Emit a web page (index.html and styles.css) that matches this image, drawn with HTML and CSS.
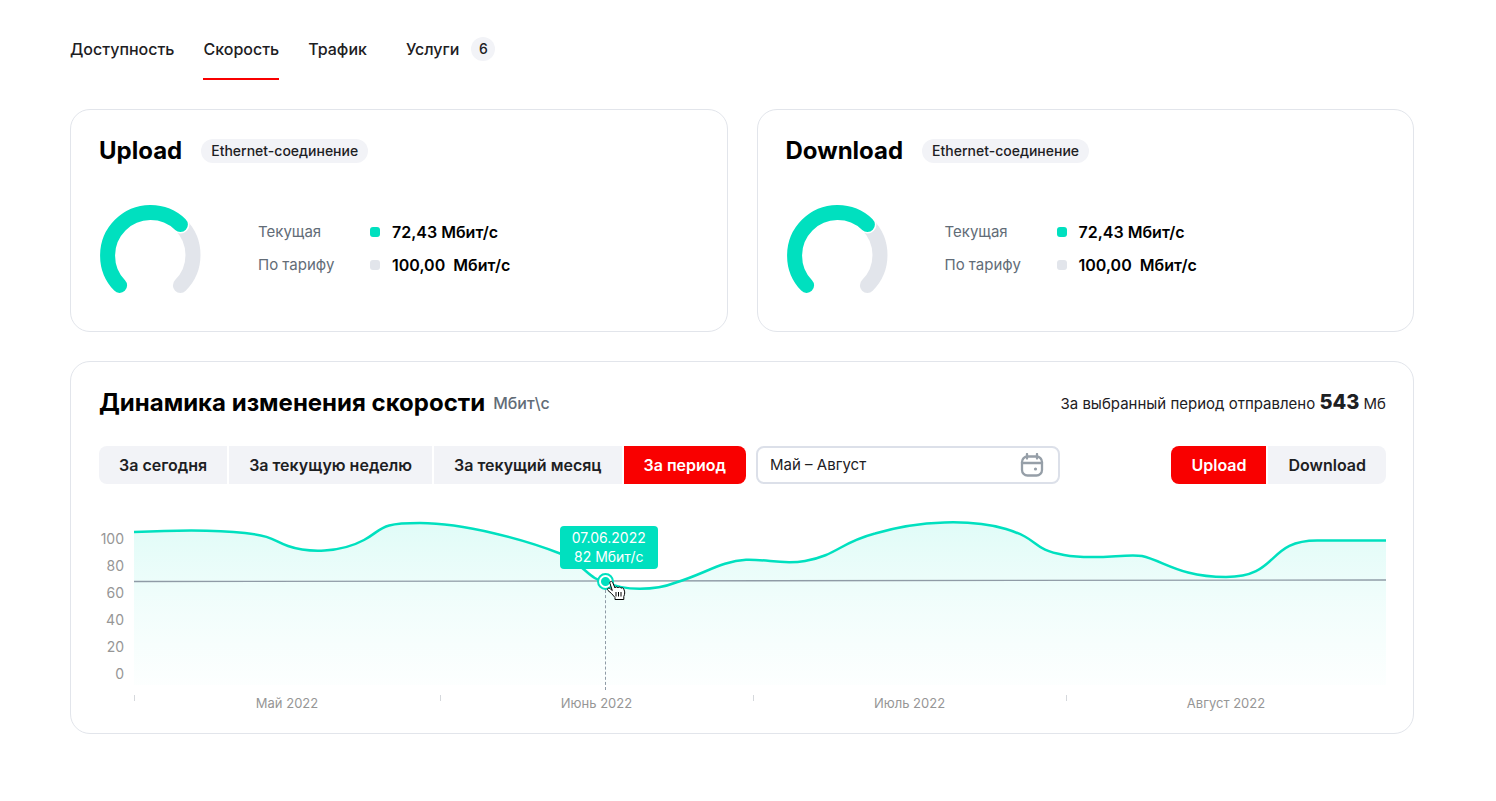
FILE: index.html
```html
<!DOCTYPE html>
<html lang="ru">
<head>
<meta charset="utf-8">
<meta name="viewport" content="width=device-width, initial-scale=1">
<title>Скорость</title>
<link rel="stylesheet" href="styles.css">
</head>
<body>
<main class="page">
  <nav class="tabs">
    <a class="tab" href="#availability">Доступность</a>
    <a class="tab tab-active" href="#speed" aria-current="page">Скорость</a>
    <a class="tab" href="#traffic">Трафик</a>
    <a class="tab tab-services" href="#services">Услуги <span class="count">6</span></a>
  </nav>

  <div class="cards">
    <section class="card">
      <header class="card-head">
        <h2 class="title">Upload</h2>
        <span class="chip">Ethernet-соединение</span>
      </header>
      <div class="speed">
        <svg class="gauge" viewBox="0 0 102 90" aria-hidden="true">
          <path class="arc arc-rest" d="M81.4 20.6A43 43 0 0 1 81.4 81.4"/>
          <path class="arc arc-gap" d="M20.6 81.4A43 43 0 0 1 81.4 20.6"/>
          <path class="arc arc-value" d="M20.6 81.4A43 43 0 0 1 81.4 20.6"/>
        </svg>
        <dl class="stats">
          <dt>Текущая</dt><dd class="now">72,43 Мбит/с</dd>
          <dt>По тарифу</dt><dd>100,00&nbsp; Мбит/с</dd>
        </dl>
      </div>
    </section>
    <section class="card">
      <header class="card-head">
        <h2 class="title">Download</h2>
        <span class="chip">Ethernet-соединение</span>
      </header>
      <div class="speed">
        <svg class="gauge" viewBox="0 0 102 90" aria-hidden="true">
          <path class="arc arc-rest" d="M81.4 20.6A43 43 0 0 1 81.4 81.4"/>
          <path class="arc arc-gap" d="M20.6 81.4A43 43 0 0 1 81.4 20.6"/>
          <path class="arc arc-value" d="M20.6 81.4A43 43 0 0 1 81.4 20.6"/>
        </svg>
        <dl class="stats">
          <dt>Текущая</dt><dd class="now">72,43 Мбит/с</dd>
          <dt>По тарифу</dt><dd>100,00&nbsp; Мбит/с</dd>
        </dl>
      </div>
    </section>
  </div>

  <section class="card">
    <header class="card-head dynamics-head">
      <h2 class="title">Динамика изменения скорости</h2>
      <span class="unit">Мбит\с</span>
      <p class="total">За выбранный период отправлено <strong>543</strong> Мб</p>
    </header>

    <div class="toolbar">
      <div class="segments">
        <button class="segment" type="button">За сегодня</button>
        <button class="segment" type="button">За текущую неделю</button>
        <button class="segment" type="button">За текущий месяц</button>
        <button class="segment segment-active" type="button" aria-pressed="true">За период</button>
      </div>
      <label class="period">
        <input class="period-input" type="text" value="Май – Август" aria-label="Период">
        <svg class="calendar" viewBox="0 0 24 24" aria-hidden="true">
          <rect x="2" y="3.500" width="20" height="19" rx="5.500"/>
          <path d="M2 10H22M7 1V5.500M17 1V5.500"/>
          <circle cx="15.500" cy="16" r="1.600"/>
        </svg>
      </label>
      <div class="segments direction">
        <button class="segment segment-active" type="button" aria-pressed="true">Upload</button>
        <button class="segment" type="button">Download</button>
      </div>
    </div>

    <div class="chart">
      <ol class="y-axis">
        <li>100</li><li>80</li><li>60</li><li>40</li><li>20</li><li>0</li>
      </ol>
      <div class="plot">
        <svg class="curve" viewBox="0 0 1252 170" preserveAspectRatio="none" aria-hidden="true">
          <defs>
            <linearGradient id="fill" x1="0" y1="0" x2="0" y2="1">
              <stop offset="0" stop-color="#00e2c0" stop-opacity=".12"/>
              <stop offset=".5" stop-color="#00e2c0" stop-opacity=".055"/>
              <stop offset="1" stop-color="#00e2c0" stop-opacity=".01"/>
            </linearGradient>
          </defs>
          <path fill="url(#fill)" d="M0 17C40 15 86 15 111 18C140 21 141 27 154 31C174 38 206 38 230 25C250 14 244 8 286 8C330 8 392 25 426 38.500C448 47 456 66 472 67C490 76 520 76 542 67.500C570 59 588 46 612 44.700C634 44 648 50 671 46C704 40 705 28 741 18.500C786 5 838 4 872 14C908 25 896 34 930 40C962 46 992 38 1008 41C1030 46 1046 62 1092 62C1146 62 1132 25 1184 25.500H1252V170H0Z"/>
          <path class="limit" d="M0 66.500L1252 65"/>
          <path class="line" d="M0 17C40 15 86 15 111 18C140 21 141 27 154 31C174 38 206 38 230 25C250 14 244 8 286 8C330 8 392 25 426 38.500C448 47 456 66 472 67C490 76 520 76 542 67.500C570 59 588 46 612 44.700C634 44 648 50 671 46C704 40 705 28 741 18.500C786 5 838 4 872 14C908 25 896 34 930 40C962 46 992 38 1008 41C1030 46 1046 62 1092 62C1146 62 1132 25 1184 25.500H1252"/>
        </svg>
        <div class="pointer">
          <div class="guide"></div>
          <div class="tooltip">07.06.2022<br>82 Мбит/с</div>
          <div class="marker"></div>
          <svg class="hand" viewBox="0 0 20 22" aria-hidden="true">
            <path d="M5.500 14.500L2 11.500C.500 9.500 2.800 8.200 4.500 10L6.300 11.500L4 4.500C3.500 2.200 5.700 1.500 6.700 3.500L9 9C9.300 7.600 11.200 7.500 12 9C12.600 7.600 14.400 7.900 15 9.300C15.900 8.200 17.400 8.700 17.800 10.200C19.200 13 18.800 15 17.800 17.500V20.500H9V18.500Z"/>
            <path d="M10 13V17.500M12.500 13V17.500M15 13V17.500"/>
          </svg>
        </div>
      </div>
      <ol class="x-axis">
        <li>Май 2022</li><li>Июнь 2022</li><li>Июль 2022</li><li>Август 2022</li>
      </ol>
    </div>
  </section>
</main>
</body>
</html>
```
FILE: styles.css
```css
* { box-sizing: border-box; }

body {
  margin: 0;
  background: #fff;
  color: #1d2023;
  font: 500 16px/22px Inter, "Noto Sans", sans-serif;
}

h2, p, dl, dd, ol { margin: 0; padding: 0; }
ol { list-style: none; }

.page { padding: 37px 82px 40px 70px; }

.tabs { display: flex; gap: 29px; margin-bottom: 29px; line-height: 24px; }
.tab {
  padding-bottom: 17px;
  border-bottom: 2px solid transparent;
  color: inherit;
  text-decoration: none;
}
.tab-active { border-color: #f90000; }
.tab-services { display: flex; gap: 12px; margin-left: 10px; }
.count {
  width: 24px;
  height: 24px;
  border-radius: 12px;
  background: #f2f3f7;
  font-size: 14px;
  text-align: center;
}

.cards { display: grid; grid-template-columns: 1fr 1fr; gap: 29px; margin-bottom: 29px; }
.card { padding: 25px 27px 22px 28px; border: 1px solid #e2e5eb; border-radius: 20px; }
.card-head { display: flex; align-items: center; gap: 19px; }
.title { color: #000; font-size: 24px; font-weight: 700; line-height: 32px; }
.chip {
  padding: 0 10px;
  border-radius: 12px;
  background: #f2f3f7;
  font-size: 14px;
  line-height: 24px;
}

.speed { display: flex; align-items: center; gap: 57px; padding: 37px 0 15px; }
.gauge { flex: none; width: 102px; height: 90px; }
.arc { fill: none; stroke-width: 15; stroke-linecap: round; }
.arc-rest { stroke: #e2e5eb; }
.arc-gap { stroke: #fff; stroke-width: 18; }
.arc-value { stroke: #00e0bf; }

.stats { display: grid; grid-template-columns: 112px auto; gap: 11px 0; padding-bottom: 1px; }
.stats dt { color: #626c77; font-size: 15px; font-weight: 400; }
.stats dd { display: flex; align-items: center; gap: 12px; color: #000; font-weight: 600; }
.stats dd::before { content: ""; width: 10px; height: 10px; border-radius: 3px; background: #e2e5eb; }
.stats .now::before { background: #00e0bf; }

.dynamics-head { gap: 8px; }
.unit { color: #626c77; }
.total { margin-left: auto; font-size: 15px; font-weight: 400; }
.total strong { font-size: 20px; font-weight: 800; }

.toolbar { display: flex; gap: 10px; margin-top: 27px; }
.segments { display: flex; gap: 2px; border-radius: 8px; overflow: hidden; }
.segment {
  height: 38px;
  padding: 0 20px;
  border: 0;
  background: #f2f3f7;
  color: inherit;
  font: inherit;
  font-weight: 600;
}
.segment-active { background: #f90000; color: #fff; }
.direction { margin-left: auto; }
.period {
  display: flex;
  align-items: center;
  width: 304px;
  height: 38px;
  padding: 0 14px 0 12px;
  border: 2px solid #dce0e9;
  border-radius: 8px;
}
.period-input { flex: 1; min-width: 0; padding: 0; border: 0; outline: 0; background: none; color: inherit; font: inherit; font-size: 15px; font-weight: 400; }
.calendar { width: 24px; height: 24px; fill: none; stroke: #969fa8; stroke-width: 2.3; stroke-linecap: round; }
.calendar circle { fill: #969fa8; stroke: none; }

.chart {
  display: grid;
  grid-template-columns: 25px 1fr;
  column-gap: 10px;
  row-gap: 10px;
  margin-top: 31px;
  color: #969696;
  font-size: 14px;
  font-weight: 400;
  line-height: 16px;
}
.y-axis { display: flex; flex-direction: column; gap: 7px; padding-top: 14px; line-height: 20px; text-align: right; }
.plot { position: relative; }
.curve { display: block; width: 100%; height: 170px; }
.line, .limit { fill: none; vector-effect: non-scaling-stroke; }
.line { stroke: #00e0bf; stroke-width: 2.5; }
.limit { stroke: #8f9ba6; stroke-width: 1.3; }
.x-axis { grid-column: 2; display: grid; grid-template-columns: 306fr 313fr 313fr 320fr; font-size: 13px; text-align: center; }
.x-axis li { background: linear-gradient(#d5d8dc, #d5d8dc) 0 0 / 1px 6px no-repeat; }

/* Zero-size anchor placed on the hovered data point */
.pointer { position: absolute; left: 37.6%; top: 66px; }
.guide { position: absolute; left: 0; top: 9px; height: 100px; border-left: 1px dashed #8f9ba6; }
.tooltip {
  position: absolute;
  left: -45px;
  bottom: 12px;
  width: 98px;
  padding: 2px 0 3px;
  border-radius: 4px;
  background: #00e0bf;
  color: #fff;
  line-height: 19px;
  text-align: center;
}
.marker {
  position: absolute;
  left: -8px;
  top: -8px;
  width: 17px;
  height: 17px;
  border: 2px solid #00e0bf;
  border-radius: 50%;
  background: radial-gradient(circle, #00e0bf 4px, #fff 5px);
}
.hand { position: absolute; left: 1px; top: -2px; width: 20px; height: 22px; fill: #fff; stroke: #000; stroke-width: 1; stroke-linejoin: round; }
```
